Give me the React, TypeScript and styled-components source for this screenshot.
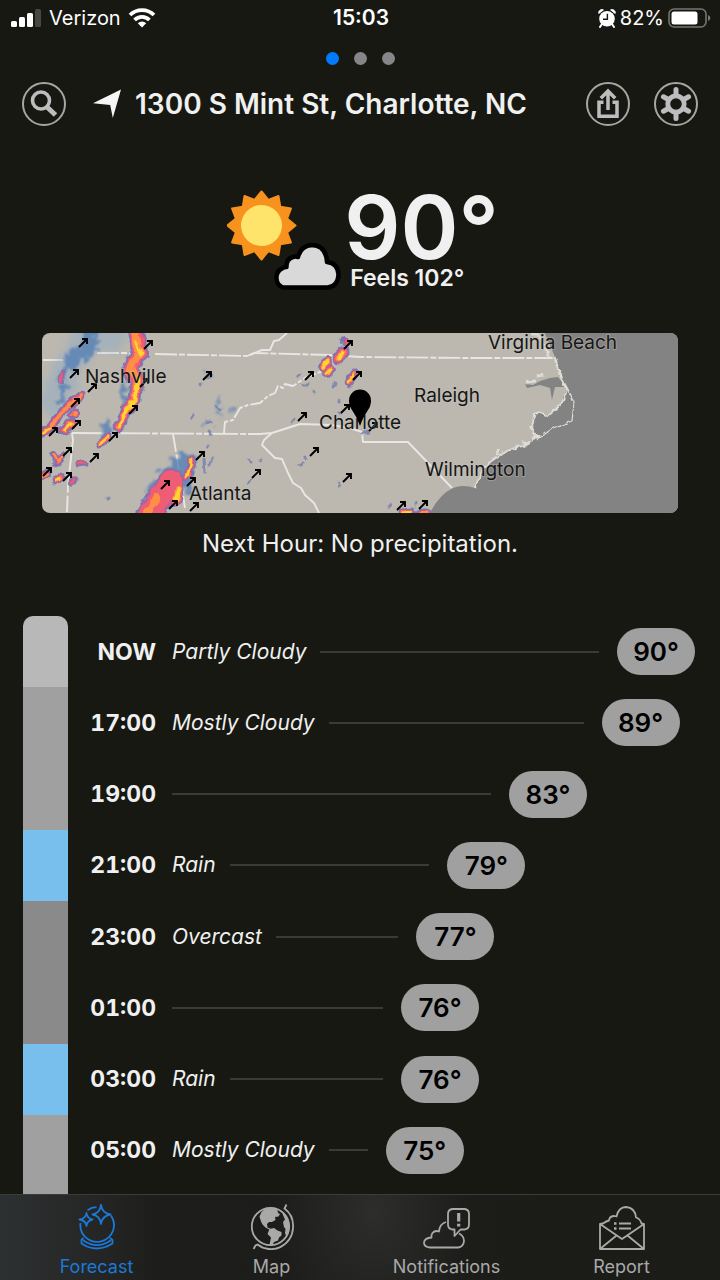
import React from 'react';
import styled, { createGlobalStyle } from 'styled-components';

const GlobalStyle = createGlobalStyle`
  *, *::before, *::after { box-sizing: border-box; }
  body {
    margin: 0;
    background: #171812;
    color: #f0f0f0;
    font-family: Inter, 'Liberation Sans', sans-serif;
  }
  button { font: inherit; color: inherit; background: none; border: 0; padding: 0; cursor: pointer; }
`;

const Screen = styled.div`
  display: flex;
  flex-direction: column;
  min-height: 100vh;
`;

/* Status bar */

const StatusBar = styled.header`
  display: grid;
  grid-template-columns: 1fr auto 1fr;
  align-items: center;
  height: 36px;
  padding: 0 9px 0 11px;
  font-size: 20px;
  line-height: 24px;
  color: #fff;
`;

const StatusGroup = styled.div<{ $end?: boolean }>`
  display: flex;
  align-items: center;
  justify-content: ${(p) => (p.$end ? 'flex-end' : 'flex-start')};
  gap: ${(p) => (p.$end ? 4 : 7)}px;
`;

const Clock = styled.time`
  font-size: 21px;
  font-weight: 600;
`;

/* Page dots and header */

const Dots = styled.nav`
  display: flex;
  justify-content: center;
  align-items: center;
  gap: 15px;
  height: 44px;
`;

const Dot = styled.button<{ $active?: boolean }>`
  width: 13px;
  height: 13px;
  border-radius: 50%;
  background: ${(p) => (p.$active ? '#007bff' : '#85858a')};
`;

const Header = styled.div`
  display: flex;
  align-items: center;
  gap: 24px;
  padding: 0 22px;
  height: 48px;
`;

const RoundButton = styled.button`
  flex: none;
  display: grid;
  place-items: center;
  width: 44px;
  height: 44px;
  border: 2px solid #a6a6a5;
  border-radius: 50%;
  color: #bdbdbf;
`;

const Place = styled.h1`
  flex: 1;
  display: flex;
  align-items: center;
  gap: 14px;
  margin: 0;
  padding-left: 3px;
  font-size: 28px;
  line-height: 32px;
  font-weight: 600;
  white-space: nowrap;
`;

/* Current conditions */

const Current = styled.section`
  display: flex;
  justify-content: center;
  gap: 2px;
  padding: 62px 0 41px 6px;
`;

const Reading = styled.div`
  display: flex;
  flex-direction: column;
  align-items: flex-start;
`;

const Temperature = styled.p`
  margin: 0;
  font-size: 88px;
  line-height: 74px;
  font-weight: 600;
`;

const Feels = styled.p`
  margin: 0;
  padding-left: 6px;
  font-size: 23px;
  line-height: 28px;
  font-weight: 600;
`;

const MapCard = styled.figure`
  margin: 0 42px;
  border-radius: 8px;
  overflow: hidden;

  svg { display: block; width: 100%; height: auto; }
`;

const NextHour = styled.p`
  margin: 0;
  padding: 17px 0 58px;
  font-size: 24px;
  line-height: 28px;
  text-align: center;
`;

/* Hourly timeline */

const Timeline = styled.section`
  flex: 1;
  display: flex;
  gap: 10px;
  padding: 0 25px 0 23px;
`;

const Strip = styled.div`
  display: flex;
  flex-direction: column;
  width: 45px;
  border-radius: 10px 10px 0 0;
  overflow: hidden;
`;

const skyColors = {
  partly: '#b8b8b8',
  mostly: '#a0a0a0',
  overcast: '#8a8a8a',
  rain: '#78bfee',
};

type Sky = keyof typeof skyColors;

const Band = styled.div<{ $sky: Sky; $hours: number }>`
  flex: ${(p) => p.$hours} 1 0;
  background: ${(p) => skyColors[p.$sky]};
`;

const BandTail = styled.div<{ $sky: Sky }>`
  height: 8px;
  background: ${(p) => skyColors[p.$sky]};
`;

const Hours = styled.ol`
  flex: 1;
  display: flex;
  flex-direction: column;
  margin: 0;
  padding: 0 0 8px;
  list-style: none;
`;

const Hour = styled.li`
  flex: 1 0 64px;
  display: flex;
  align-items: center;
`;

const HourTime = styled.time`
  width: 78px;
  margin-right: 16px;
  font-size: 23px;
  line-height: 28px;
  font-weight: 700;
  font-variant-numeric: tabular-nums;
  text-align: right;
`;

const Summary = styled.span`
  margin-right: 14px;
  font-size: 21px;
  line-height: 28px;
  font-style: italic;
  white-space: nowrap;
`;

const Leader = styled.span`
  flex: 1;
  height: 2px;
  margin-right: 18px;
  background: #3a3b36;
`;

const Pill = styled.span`
  width: 78px;
  border-radius: 24px;
  background: #a0a0a0;
  color: #000;
  font-size: 26px;
  line-height: 47px;
  font-weight: 600;
  text-align: center;
`;

/* Tab bar */

const TabBar = styled.nav`
  position: sticky;
  bottom: 0;
  display: flex;
  height: 86px;
  padding: 0 11px 0 9px;
  border-top: 1px solid #3b3c38;
  background:
    radial-gradient(ellipse 100px 130px at 52% 20%, #2d2d2c, transparent),
    linear-gradient(90deg, #2d3031 0, #292b2b 8%, #1d1e1b 22%, #1b1c18 100%);
`;

const Tab = styled.button<{ $active?: boolean }>`
  flex: 1;
  display: flex;
  flex-direction: column;
  align-items: center;
  justify-content: flex-end;
  padding-bottom: 1px;
  font-size: 18px;
  line-height: 24px;
  color: ${(p) => (p.$active ? '#1c78d6' : '#a9a9a9')};

  svg { display: block; margin-bottom: 5px; }
`;

/* Icons */

const SignalIcon = () => (
  <svg width="31" height="20" viewBox="0 0 31 20" fill="#fff" aria-hidden="true">
    <rect x="0" y="13" width="6" height="6" rx="1.5" />
    <rect x="8" y="9" width="6" height="10" rx="1.5" />
    <rect x="16" y="5" width="6" height="14" rx="1.5" />
    <rect x="24" y="1" width="6" height="18" rx="1.5" fill="#474844" />
  </svg>
);

const WifiIcon = () => (
  <svg width="28" height="20" viewBox="0 0 28 20" aria-hidden="true">
    <g fill="none" stroke="#fff" strokeWidth="3.8">
      <path d="M2 7 a17 17 0 0 1 24 0" />
      <path d="M6.6 12 a10.5 10.5 0 0 1 14.8 0" />
    </g>
    <path d="M9.8 15.2 a6 6 0 0 1 8.4 0 L14 19.6 Z" fill="#fff" />
  </svg>
);

const AlarmIcon = () => (
  <svg width="18" height="19" viewBox="0 0 18 19" aria-hidden="true">
    <path d="M.8 4.4 A3.2 3.2 0 0 1 5.4 .9 Z M17.2 4.4 A3.2 3.2 0 0 0 12.6 .9 Z" fill="#fff" stroke="#fff" />
    <path d="M4 15 L2 18 M14 15 L16 18" stroke="#fff" strokeWidth="2" strokeLinecap="round" />
    <circle cx="9" cy="9.8" r="7.8" fill="#fff" />
    <path d="M9.4 4.8 V10.2 H5" fill="none" stroke="#171812" strokeWidth="1.4" />
  </svg>
);

const BatteryIcon = () => (
  <svg width="43" height="20" viewBox="0 0 43 20" aria-hidden="true">
    <rect x="1" y="1" width="37" height="18" rx="5" fill="none" stroke="#75766f" strokeWidth="1.6" />
    <rect x="3.5" y="3.5" width="26" height="13" rx="2.5" fill="#fff" />
    <path d="M40 7 q2.4 .8 2.4 3 t-2.4 3 Z" fill="#75766f" />
  </svg>
);

const SearchIcon = () => (
  <svg width="28" height="28" viewBox="0 0 28 28" fill="none" stroke="currentColor" aria-hidden="true">
    <circle cx="11" cy="10.5" r="8.5" strokeWidth="3.6" />
    <path d="M17 17 L25.5 25" strokeWidth="5" />
  </svg>
);

const LocationIcon = () => (
  <svg width="28" height="30" viewBox="0 0 28 30" fill="#f6f6f6" aria-hidden="true">
    <path d="M28 .5 L0 14.3 L17.2 16 L19.8 29 Z" />
  </svg>
);

const ShareIcon = () => (
  <svg width="24" height="32" viewBox="0 0 24 32" fill="none" stroke="currentColor" strokeWidth="3.5" aria-hidden="true">
    <path d="M7.500 14.300 H3 V28.300 H21 V14.300 H16.500" />
    <path d="M12 22 V4 M4.800 10.300 L12 3 L19.200 10.300" />
  </svg>
);

const GearIcon = () => (
  <svg width="34" height="34" viewBox="0 0 34 34" fill="none" stroke="currentColor" aria-hidden="true">
    <circle cx="17" cy="17" r="8.2" strokeWidth="4.8" />
    {[0, 60, 120, 180, 240, 300].map((a) => (
      <path key={a} d="M17 8.5 V2.500" strokeWidth="5" strokeLinecap="round" transform={`rotate(${a} 17 17)`} />
    ))}
  </svg>
);

const sunPoints = Array.from({ length: 24 }, (_, i) => {
  const r = i % 2 ? 26.5 : 34;
  const a = (i * Math.PI) / 12;
  return `${34.5 + r * Math.sin(a)},${35.5 - r * Math.cos(a)}`;
}).join(' ');

const PartlyCloudyIcon = () => (
  <svg width="115" height="102" viewBox="0 0 115 102" role="img" aria-label="Partly cloudy">
    <polygon points={sunPoints} fill="#f8921e" stroke="#f8921e" strokeWidth="2" strokeLinejoin="round" />
    <circle cx="34.5" cy="35.5" r="20.5" fill="#ffe46b" />
    <path
      d="M56 97.500 a10.500 10.500 0 0 1 -1 -19 q2 -1.500 4.500 -1.500 q-.5 -8 6.500 -10 q2.500 -.8 5 0 q3 -11.500 14 -12 q14 .5 15 17 q11 1 11.500 12.500 q-.5 12 -11 13 Z"
      fill="#d9d9d9"
      stroke="#000"
      strokeWidth="4.500"
      strokeLinejoin="round"
    />
  </svg>
);

const CrystalBallIcon = () => (
  <svg width="38" height="46" viewBox="0 0 38 46" fill="none" stroke="currentColor" strokeWidth="1.800" strokeLinejoin="round" aria-hidden="true">
    <path d="M9.500 6.200 A16.500 16.500 0 0 1 18.500 3.200 M33 11.500 A16.800 16.800 0 1 1 2.500 19" />
    <path d="M5.500 34 L3.500 36 V39.500 Q18.500 49.500 34.500 39.500 V36 L32 34" />
    <path d="M5 36.200 Q19 46 33 36.200" />
    <path d="M23 .8 Q24 9 32.500 10.500 Q24 12 23 20 Q22 12 14.500 10.500 Q22 9 23 .8 Z" />
    <path d="M8.500 9 Q9.200 14.500 14.500 15.500 Q9.200 16.500 8.500 22 Q7.800 16.500 1.500 15.500 Q7.800 14.500 8.500 9 Z" />
  </svg>
);

const GlobeIcon = () => (
  <svg width="46" height="46" viewBox="0 0 46 46" fill="none" stroke="currentColor" strokeWidth="1.800" aria-hidden="true">
    <circle cx="21.500" cy="22.500" r="18.700" />
    <path d="M37.500 .5 L35.500 4.500 Q45 11.500 44 24 A22 22 0 0 1 8.500 40.500 L6.500 41.500 L4.500 45" />
    <g fill="currentColor" stroke="none">
      <path d="M21 4 L26 4.500 L28.500 6 L29 9 L31 10 L29.500 12.500 L26 13 L26.500 16 L23 18 L20 18 L18 20 L18.500 23.500 L22 25 L21 26 L16.500 23.500 L13.500 20.500 L12 17.500 L10.500 12.500 L12.500 8 L16 5 Z" />
      <path d="M20.500 25 L25 24 L28.500 26.500 L32.500 28 L32.500 31.500 L30 33.500 L29 36.500 L25 38 L23.500 41 L20.500 41 L21.500 36 L22 33.500 L18.500 30 Z" />
      <path d="M33 7 Q40.500 13 40.200 22.500 Q40 29 37.500 33 L36 29 L36.500 25 L35 23 L34 18 L36 15.500 L34 11 Z" />
    </g>
  </svg>
);

const AlertCloudIcon = () => (
  <svg width="47" height="42" viewBox="0 0 47 42" fill="none" stroke="currentColor" strokeWidth="1.800" strokeLinejoin="round" aria-hidden="true">
    <path d="M23 14 Q16.500 16 16 23.500 Q12 22 9.500 25 Q8 27 8.500 29.500 Q1.500 30 1 34.500 Q1 39 7 39.500 H35.500 Q40.500 38.500 41 33 Q41 28 36 25.500" />
    <path d="M29.500 1 H41.500 Q46 1.500 46 6 V16.500 Q46 21 41.500 21.500 H37.500 L31.500 28 V21.500 H29.500 Q25 21 25 16.500 V6 Q25 1.500 29.500 1 Z" />
    <path d="M35.700 5 V13.500 M35.700 15.800 V18.600" strokeWidth="3.200" />
  </svg>
);

const ReportIcon = () => (
  <svg width="46" height="44" viewBox="0 0 46 44" fill="none" stroke="currentColor" strokeWidth="1.800" strokeLinejoin="round" aria-hidden="true">
    <path d="M1 18 L23 33 L45 18 V43 H1 Z" />
    <path d="M1 43 L17.500 29.500 M45 43 L28.500 29.500" />
    <path d="M1 18 L4 17.500 Q7.500 15 10 14.500 Q10.500 10 15.500 10 L17.500 10.500 Q19.500 1.200 27 1 Q36 1.500 37 11.500 Q41 12.500 42.500 17.500 L45 18" />
    <path d="M20 17.500 H32 M20 22.500 H32" strokeWidth="2" />
    <path d="M15 17.500 H17.500 M15 22.500 H17.500" strokeWidth="2.500" />
  </svg>
);

/* Radar map */

const windArrows = [
  [41, 10], [32, 41], [50, 55], [33, 70], [11, 99], [34, 92], [106, 12], [102, 50], [91, 77],
  [71, 104], [25, 119], [52, 125], [5, 139], [25, 144], [123, 152], [131, 172], [152, 174],
  [149, 149], [158, 123], [165, 43], [214, 141], [306, 12], [267, 43], [315, 43], [303, 76],
  [260, 84], [331, 94], [272, 119], [305, 145], [359, 173], [381, 172],
];

const cities = [
  { name: 'Nashville', x: 43, y: 50 },
  { name: 'Atlanta', x: 147, y: 167 },
  { name: 'Charlotte', x: 277, y: 96 },
  { name: 'Raleigh', x: 372, y: 69 },
  { name: 'Wilmington', x: 383, y: 143 },
  { name: 'Virginia Beach', x: 446, y: 16 },
];

const haze = [
  'M48 -4 L36 22 L22 44 L12 70',
  'M60 0 L70 4',
];

const heavyCloud = [
  { d: 'M50 -6 L46 16 L32 26', w: 17 },
  { d: 'M30 24 L20 46', w: 7 },
  { d: 'M22 54 L18 68', w: 6 },
  { d: 'M82 56 L84 70', w: 7 },
  { d: 'M63 92 L64 104', w: 8 },
  { d: 'M142 128 L128 142', w: 18 },
  { d: 'M120 146 L108 162', w: 10 },
  { d: 'M140 140 L146 154', w: 9 },
];

const lightRain = [
  'M162 38 L170 44',
  'M176 66 L174 74 L180 84',
  'M186 74 L192 78',
  'M160 88 L170 90',
];

const showers = [
  'M165 46 L168 42', 'M158 50 L158 51', 'M175 73 L178 76', 'M150 84 L151 82', 'M166 90 L169 89',
  'M168 100 L168 101', 'M166 113 L166 114', 'M170 124 L168 132', 'M162 128 L163 138', 'M207 128 L209 129',
  'M205 148 L207 147', 'M217 127 L218 128', 'M258 42 L258 43', 'M260 52 L265 52', 'M272 59 L273 60',
  'M293 50 L292 54', 'M297 68 L297 69', 'M250 89 L251 88', 'M296 81 L298 80', 'M321 100 L325 99',
  'M259 132 L260 131', 'M263 126 L264 125', 'M296 151 L297 151', 'M348 171 L349 173', 'M373 172 L374 171',
  'M64 165 L66 164', 'M37 128 L40 127',
];

/* Each cell: its track, its width and the hottest step of the scale it reaches. */
const storms = [
  { d: 'M93 -3 L96 14 L99 21 L90 28 L88 36 L95 46', w: 12, peak: 3 },
  { d: 'M95 10 L100 22', w: 7, peak: 4 },
  { d: 'M95 46 L93 66 L86 76 L77 93', w: 9, peak: 4 },
  { d: 'M130 148 L120 162 L106 182', w: 22, peak: 2 },
  { d: 'M114 166 L104 184', w: 13, peak: 3 },
  { d: 'M136 156 L134 168', w: 9, peak: 4 },
  { d: 'M149 128 L145 145', w: 5, peak: 4 },
  { d: 'M20 42 L19 48', w: 4, peak: 2 },
  { d: 'M39 62 L25 74 L16 84 L8 94', w: 5, peak: 3 },
  { d: 'M8 94 L0 101', w: 6, peak: 4 },
  { d: 'M32 80 L31 82', w: 5, peak: 3 },
  { d: 'M29 91 L23 97', w: 7, peak: 4 },
  { d: 'M66 104 L58 111', w: 5, peak: 4 },
  { d: 'M11 122 L15 130 L20 124', w: 4, peak: 3 },
  { d: 'M18 144 L14 147', w: 5, peak: 4 },
  { d: 'M29 150 L33 148', w: 3, peak: 2 },
  { d: 'M37 130 L41 129', w: 3, peak: 2 },
  { d: 'M0 143 L5 140', w: 4, peak: 3 },
  { d: 'M303 9 L304 9', w: 4, peak: 2 },
  { d: 'M301 20 L297 24', w: 9, peak: 4 },
  { d: 'M285 30 L281 33', w: 6, peak: 4 },
  { d: 'M289 36 L285 40', w: 6, peak: 4 },
  { d: 'M313 40 L308 48', w: 5, peak: 4 },
  { d: 'M361 180 L368 179', w: 7, peak: 4 },
  { d: 'M377 180 L384 179', w: 5, peak: 3 },
];

const intensity = [
  { color: '#6d83b8', width: (w: number) => w + 4 },
  { color: '#a3609e', width: (w: number) => w + 2 },
  { color: '#ee5c76', width: (w: number) => w },
  { color: '#ff8f45', width: (w: number) => w * 0.65 },
  { color: '#ffd333', width: (w: number) => w * 0.45 },
];

const RadarMap = () => (
  <svg viewBox="0 0 636 180" role="img" aria-label="Radar map around Charlotte">
    <defs>
      <filter id="ragged" x="-20%" y="-20%" width="140%" height="140%">
        <feTurbulence type="fractalNoise" baseFrequency="0.1" numOctaves="2" seed="4" result="noise" />
        <feDisplacementMap in="SourceGraphic" in2="noise" scale="8" xChannelSelector="R" yChannelSelector="G" />
        <feGaussianBlur stdDeviation="0.700" />
      </filter>
      <filter id="patchy" x="-50%" y="-50%" width="200%" height="200%">
        <feTurbulence type="fractalNoise" baseFrequency="0.14" numOctaves="3" seed="7" result="noise" />
        <feDisplacementMap in="SourceGraphic" in2="noise" scale="18" xChannelSelector="R" yChannelSelector="G" />
        <feGaussianBlur stdDeviation="1.200" />
      </filter>
      <filter id="cloudy" x="-50%" y="-50%" width="200%" height="200%">
        <feTurbulence type="fractalNoise" baseFrequency="0.08" numOctaves="2" seed="9" result="noise" />
        <feDisplacementMap in="SourceGraphic" in2="noise" scale="22" xChannelSelector="R" yChannelSelector="G" />
        <feGaussianBlur stdDeviation="3.500" />
      </filter>
      <filter id="coast">
        <feTurbulence type="fractalNoise" baseFrequency="0.2" numOctaves="2" seed="2" result="noise" />
        <feDisplacementMap in="SourceGraphic" in2="noise" scale="4" xChannelSelector="R" yChannelSelector="G" />
      </filter>
    </defs>
    <rect width="636" height="180" fill="#bcb8b0" />
    <path
      d="M501 -4 L507 10 L513 24 L518 40 L525 57 L522 62 L520 70 L513 77 L506 83 L496 79 L492 82 L491 90 L489 95 L493 102 L486 112 L475 114 L461 120 L448 129 L441 137 L436 147 L433 155 Q421 151 411 155 Q396 162 386 184 L644 184 L644 -4 Z"
      fill="#838383"
    />
    <path d="M483 51 L491 52 L498 48 L508 45 L516 44 L524 54 L513 54 L510 67 L508 55 L498 52 L485 55 Z" fill="#838383" />
    <g fill="none" stroke="#deddd6" strokeLinejoin="round" filter="url(#coast)">
      <path d="M489 1 L497 3 L503 12 L507 24 L513 26 L518 42 L525 57 L520 70 L513 77 L506 83 L496 79 L492 82 L491 90 L489 95 L493 102 L486 112 L475 114 L461 120 L448 129 L441 137 L436 147 L433 155" strokeWidth="2" />
      <path d="M494 43 L502 42 M484 49 L494 48 M455 116 L456 121 M480 110 L488 111 M492 104 L498 104" strokeWidth="3" />
      <path d="M513 24 L521 47 L528 60 L532 70 L530 88 L511 95 L495 107" strokeWidth="1.200" />
    </g>
    <g fill="none" stroke="#e8e7e3" strokeWidth="1.900" strokeLinejoin="round">
      <path d="M1 27 H21 M55 20 H88 M113 21 L205 23 M205 23 L212 20 L288 22 L318 24 L428 25 L510 25" strokeDasharray="22 2 6 2" />
      <path d="M30 100 L218 101 L230 100" strokeDasharray="34 2 6 2" />
      <path d="M30 100 L31 107 L26 152 L25 179 M131 101 L135 125 L143 175" strokeDasharray="18 3" />
      <path d="M182 100 L183 89 L191 87 L198 75 L206 72 L218 70 L226 63 L233 60 L236 53 L241 55 L243 51 L251 53 L263 45 L278 39 L288 23" strokeDasharray="14 2 4 2" />
      <path d="M208 22 L220 17 L228 17 L232 8 L237 7 L245 0" />
      <path d="M230 100 L258 91 L290 92 L308 95 L320 99 L321 109 L366 109 L410 155" />
      <path d="M230 100 L222 107 L220 112 L226 118 L233 125 L240 126 L246 140 L251 150 L259 155 L263 162 L272 170 L277 180" />
    </g>
    <g fill="none" strokeLinecap="round" strokeLinejoin="round">
      <g stroke="#8fabc4" strokeWidth="28" opacity="0.500" filter="url(#cloudy)">
        {haze.map((d) => <path key={d} d={d} />)}
      </g>
      <g stroke="#5580b6" opacity="0.800" filter="url(#patchy)">
        {heavyCloud.map((c) => <path key={c.d} d={c.d} strokeWidth={c.w} />)}
      </g>
      <g stroke="#6a8ab4" strokeWidth="3" opacity="0.850" filter="url(#patchy)">
        {lightRain.map((d) => <path key={d} d={d} />)}
      </g>
      <g stroke="#7a82ae" strokeWidth="3" opacity="0.850" filter="url(#ragged)">
        {showers.map((d) => <path key={d} d={d} />)}
      </g>
      <g filter="url(#ragged)">
        {intensity.map((level, step) => (
          <g key={level.color} stroke={level.color}>
            {storms
              .filter((s) => s.peak >= step)
              .map((s) => <path key={s.d} d={s.d} strokeWidth={level.width(s.w)} />)}
          </g>
        ))}
      </g>
    </g>
    <g fill="none" stroke="#000" strokeWidth="1.900">
      {windArrows.map(([x, y]) => (
        <path key={`${x}-${y}`} d={`M${x - 4} ${y + 4} L${x + 4} ${y - 4} M${x - 1} ${y - 4} H${x + 4} V${y + 1}`} />
      ))}
    </g>
    <g fontSize="19" fill="#161616" stroke="#c9c6c0" strokeOpacity="0.350" strokeWidth="2" paintOrder="stroke">
      {cities.map((c) => <text key={c.name} x={c.x} y={c.y}>{c.name}</text>)}
    </g>
    <path d="M318 93 Q315 84 310 77 Q307 73 307 67.500 A11 11 0 0 1 329 67.500 Q329 73 326 77 Q321 84 318 93 Z" fill="#000" />
  </svg>
);

/* Data */

const bands: { sky: Sky; hours: number }[] = [
  { sky: 'partly', hours: 1 },
  { sky: 'mostly', hours: 2 },
  { sky: 'rain', hours: 1 },
  { sky: 'overcast', hours: 2 },
  { sky: 'rain', hours: 1 },
  { sky: 'mostly', hours: 1 },
];

const hours = [
  { time: 'NOW', summary: 'Partly Cloudy', temp: 90 },
  { time: '17:00', summary: 'Mostly Cloudy', temp: 89 },
  { time: '19:00', summary: '', temp: 83 },
  { time: '21:00', summary: 'Rain', temp: 79 },
  { time: '23:00', summary: 'Overcast', temp: 77 },
  { time: '01:00', summary: '', temp: 76 },
  { time: '03:00', summary: 'Rain', temp: 76 },
  { time: '05:00', summary: 'Mostly Cloudy', temp: 75 },
];

const maxTemp = Math.max(...hours.map((h) => h.temp));

const tabs = [
  { label: 'Forecast', Icon: CrystalBallIcon },
  { label: 'Map', Icon: GlobeIcon },
  { label: 'Notifications', Icon: AlertCloudIcon },
  { label: 'Report', Icon: ReportIcon },
];

export default function App() {
  return (
    <Screen>
      <GlobalStyle />
      <StatusBar>
        <StatusGroup>
          <SignalIcon />
          <span>Verizon</span>
          <WifiIcon />
        </StatusGroup>
        <Clock>15:03</Clock>
        <StatusGroup $end>
          <AlarmIcon />
          <span>82%</span>
          <BatteryIcon />
        </StatusGroup>
      </StatusBar>

      <Dots aria-label="Locations">
        <Dot $active aria-label="Location 1" />
        <Dot aria-label="Location 2" />
        <Dot aria-label="Location 3" />
      </Dots>

      <Header>
        <RoundButton aria-label="Search"><SearchIcon /></RoundButton>
        <Place><LocationIcon />1300 S Mint St, Charlotte, NC</Place>
        <RoundButton aria-label="Share"><ShareIcon /></RoundButton>
        <RoundButton aria-label="Settings"><GearIcon /></RoundButton>
      </Header>

      <Current>
        <PartlyCloudyIcon />
        <Reading>
          <Temperature>90°</Temperature>
          <Feels>Feels 102°</Feels>
        </Reading>
      </Current>

      <MapCard><RadarMap /></MapCard>
      <NextHour>Next Hour: No precipitation.</NextHour>

      <Timeline aria-label="Hourly forecast">
        <Strip>
          {bands.map((b, i) => <Band key={i} $sky={b.sky} $hours={b.hours} />)}
          <BandTail $sky="mostly" />
        </Strip>
        <Hours>
          {hours.map((h) => (
            <Hour key={h.time}>
              <HourTime>{h.time}</HourTime>
              {h.summary && <Summary>{h.summary}</Summary>}
              <Leader />
              <Pill style={{ marginRight: `${(maxTemp - h.temp) * 2.5}%` }}>{h.temp}°</Pill>
            </Hour>
          ))}
        </Hours>
      </Timeline>

      <TabBar aria-label="Sections">
        {tabs.map(({ label, Icon }, i) => (
          <Tab key={label} $active={i === 0} aria-current={i === 0 ? 'page' : undefined}>
            <Icon />
            {label}
          </Tab>
        ))}
      </TabBar>
    </Screen>
  );
}
